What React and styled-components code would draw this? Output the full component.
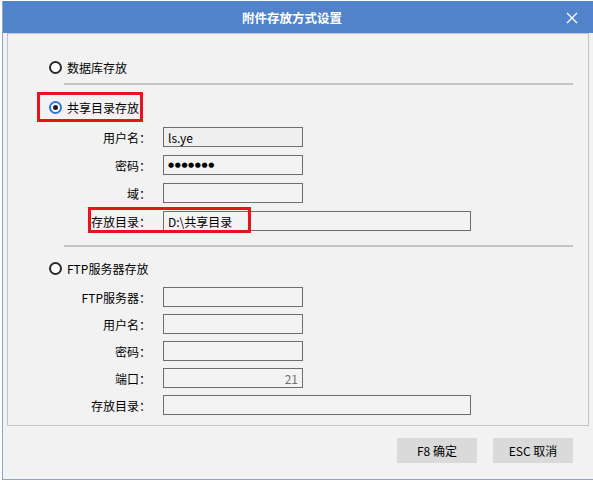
import React from "react";
import styled, { createGlobalStyle } from "styled-components";

const GlobalStyle = createGlobalStyle`
  html, body {
    margin: 0;
    padding: 0;
    background: #ffffff;
  }
  body {
    font-family: "Noto Sans CJK SC", "Noto Sans", sans-serif;
    font-size: 12px;
    color: #000;
  }
`;

// Styled Components
const Page = styled.div`
  width: 593px;
  height: 480px;
  padding: 1px 0 0 2px;
  box-sizing: border-box;
  overflow: hidden;
`;
const Window = styled.div`
  width: 591px;
  height: 479px;
  box-sizing: border-box;
  border-left: 1px solid #8aa4d4;
  border-bottom: 1px solid #8aa4d4;
  background: #f2f2f2;
  display: flex;
  flex-direction: column;
`;
const TitleBar = styled.div`
  height: 32px;
  flex: none;
  background: #5083c9;
  display: flex;
  align-items: center;
  justify-content: center;
  position: relative;
  padding-right: 12px;
`;
const Title = styled.span`
  color: #fff;
  font-weight: bold;
  font-size: 12.5px;
`;
const CloseButton = styled.button`
  position: absolute;
  right: 15px;
  top: 10px;
  width: 13px;
  height: 13px;
  padding: 0;
  border: none;
  background: transparent;
  display: flex;
  align-items: center;
  justify-content: center;
`;
const Group = styled.div`
  height: 393px;
  margin: 0 4px;
  flex: none;
  box-sizing: border-box;
  border: 1px solid #c4c4c4;
  padding-top: 21px;
  display: flex;
  flex-direction: column;
`;
const Option = styled.div`
  display: inline-flex;
  align-self: flex-start;
  align-items: center;
  gap: 5px;
  height: 24px;
  padding: 0 1px 0 9px;
  margin-left: 32px;
  margin-top: ${(p) => p.$mt || 0}px;
  outline: ${(p) => (p.$highlight ? "3px solid #e8141c" : "none")};
`;
const Radio = styled.span`
  width: 13px;
  height: 13px;
  box-sizing: border-box;
  border-radius: 50%;
  border: 2px solid ${(p) => (p.$checked ? "#2b79d6" : "#2a2a2a")};
  background: #fff;
  display: flex;
  align-items: center;
  justify-content: center;
  &::after {
    content: "";
    width: 5px;
    height: 5px;
    border-radius: 50%;
    background: ${(p) => (p.$checked ? "#1e1e1e" : "transparent")};
  }
`;
const Separator = styled.div`
  height: 2px;
  margin: ${(p) => p.$mt}px 15px 0 56px;
  background: #c4c4c4;
`;
const Fields = styled.div`
  display: flex;
  flex-direction: column;
  gap: ${(p) => p.$gap}px;
  margin-top: ${(p) => p.$mt}px;
`;
const FieldRow = styled.div`
  display: flex;
  align-items: center;
  height: 20px;
  position: relative;
  ${(p) =>
    p.$highlight &&
    `
    &::after {
      content: "";
      position: absolute;
      left: 80px;
      top: -4px;
      width: 163px;
      height: 26px;
      box-sizing: border-box;
      border: 3px solid #e8141c;
    }
  `}
`;
const Label = styled.span`
  width: 143px;
  text-align: right;
  flex: none;
`;
const Input = styled.div`
  margin-left: 12px;
  width: ${(p) => (p.$wide ? 308 : 140)}px;
  height: 20px;
  box-sizing: border-box;
  border: 1px solid #6e6e6e;
  background: ${(p) => p.$bg || "#f3f3f3"};
  padding: 0 4px 0 4px;
  display: flex;
  align-items: center;
  justify-content: ${(p) => (p.$right ? "flex-end" : "flex-start")};
  color: ${(p) => p.$color || "#000"};
  white-space: nowrap;
  overflow: hidden;
`;
const Dots = styled.span`
  font-family: "DejaVu Sans", sans-serif;
  font-size: 7px;
  letter-spacing: 0.6px;
`;
const Footer = styled.div`
  flex: 1;
  display: flex;
  justify-content: flex-end;
  align-items: flex-start;
  gap: 16px;
  padding: 12px 20px 0 0;
`;
const Button = styled.button`
  width: 80px;
  height: 25px;
  border: none;
  background: #dadada;
  font-family: "Noto Sans CJK SC", "Noto Sans", sans-serif;
  font-size: 12px;
  color: #000;
  padding: 0;
`;

const shareFields = [
  { label: "用户名：", value: "ls.ye", bg: "#efefef" },
  { label: "密码：", password: true },
  { label: "域：", value: "" },
  { label: "存放目录：", value: "D:\\共享目录", wide: true, highlight: true },
];

const ftpFields = [
  { label: "FTP服务器：", value: "" },
  { label: "用户名：", value: "" },
  { label: "密码：", value: "" },
  { label: "端口：", value: "21", right: true, color: "#707070" },
  { label: "存放目录：", value: "", wide: true },
];

const renderField = (f, i) => (
  <FieldRow key={i} $highlight={f.highlight}>
    <Label>{f.label}</Label>
    <Input $wide={f.wide} $right={f.right} $color={f.color} $bg={f.bg}>
      {f.password ? <Dots>●●●●●●●</Dots> : f.value}
    </Input>
  </FieldRow>
);

const App = () => {
  return (
    <Page>
      <GlobalStyle />
      <Window>
        <TitleBar>
          <Title>附件存放方式设置</Title>
          <CloseButton aria-label="close">
            <svg width="12" height="12" viewBox="0 0 12 12">
              <path d="M1 1 L11 11 M11 1 L1 11" stroke="#fff" strokeWidth="1.3" />
            </svg>
          </CloseButton>
        </TitleBar>
        <Group>
          <Option>
            <Radio />
            <span>数据库存放</span>
          </Option>
          <Separator $mt={4} />
          <Option $mt={10} $highlight>
            <Radio $checked />
            <span>共享目录存放</span>
          </Option>
          <Fields $gap={8} $mt={8}>
            {shareFields.map(renderField)}
          </Fields>
          <Separator $mt={14} />
          <Option $mt={9}>
            <Radio />
            <span>FTP服务器存放</span>
          </Option>
          <Fields $gap={7} $mt={7}>
            {ftpFields.map(renderField)}
          </Fields>
        </Group>
        <Footer>
          <Button>F8 确定</Button>
          <Button>ESC 取消</Button>
        </Footer>
      </Window>
    </Page>
  );
};

export default App;
